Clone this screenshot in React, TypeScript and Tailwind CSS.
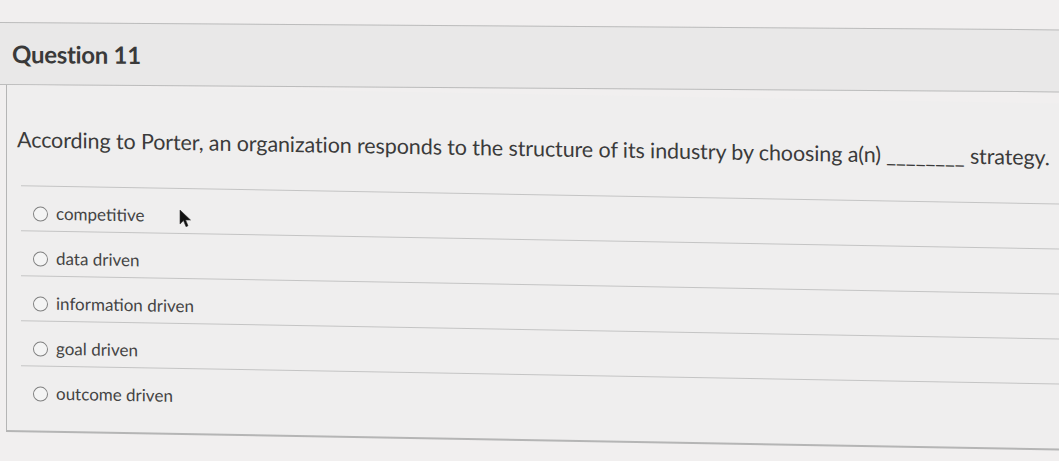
const options = ['competitive', 'data driven', 'information driven', 'goal driven', 'outcome driven']

function Radio() {
  return <span className="mt-[3px] h-[15px] w-[15px] shrink-0 rounded-full border-[1.5px] border-[#808080] bg-[#f4f4f4]" />
}

function Cursor() {
  return (
    <svg className="absolute left-[158px] top-[20px]" width="13" height="19" viewBox="0 0 13 19">
      <path d="M1 1 L1 15 L4.5 11.5 L7 17.5 L9 16.6 L6.6 10.8 L11.5 10.8 Z" fill="#111" stroke="#333" strokeWidth="0.6" />
    </svg>
  )
}

export default function App() {
  return (
    <div className="min-h-screen overflow-hidden bg-[#f1efef] pt-[22px] font-['Lato','Open_Sans',sans-serif] text-[#3b3b3b]">
      <div className="flex h-[63px] origin-top-left skew-y-[0.4deg] items-center border-y border-[#bcbcbc] bg-[#e9e8e8] pl-[12px]">
        <h2 className="text-[24px] font-bold tracking-[-0.3px] text-[#3a3a3a]">Question 11</h2>
      </div>

      <div className="ml-[6px] origin-top-left skew-y-[1deg] border-b-2 border-l border-[#b5b5b5] bg-[#efeeee]">
        <div className="h-[100px] pl-[10px] pt-[40px]">
          <p className="whitespace-nowrap text-[21.5px] leading-[28px] tracking-[-0.1px]">
            According to Porter, an organization responds to the structure of its industry by choosing a(n) ________ strategy.
          </p>
        </div>

        <div className="ml-[14px] border-t border-[#c4c4c4]">
          {options.map((o, i) => (
            <div
              key={o}
              className={
                i === options.length - 1
                  ? 'relative flex h-[64px] items-start gap-[8px] pl-[12px] pt-[17px]'
                  : 'relative flex h-[45px] items-start gap-[8px] border-b border-[#c4c4c4] pl-[12px] pt-[17px]'
              }
            >
              <Radio />
              <span className="text-[17px] leading-[20px] text-[#444]">{o}</span>
              {i === 0 && <Cursor />}
            </div>
          ))}
        </div>
      </div>
    </div>
  )
}
